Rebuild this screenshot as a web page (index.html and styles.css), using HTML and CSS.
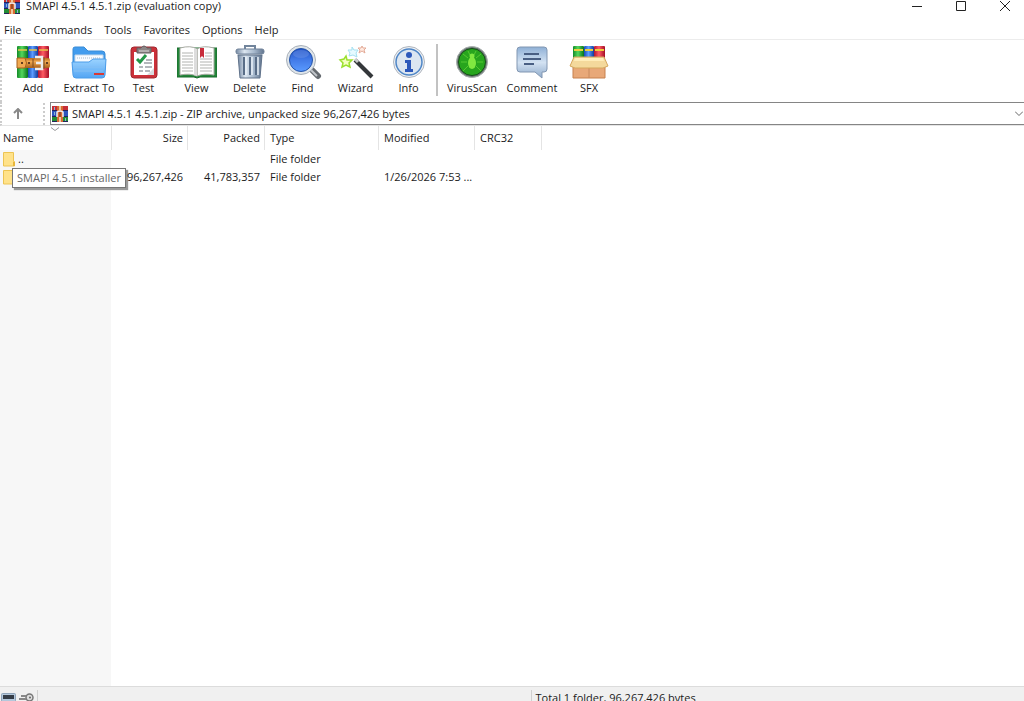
FILE: index.html
```html
<!DOCTYPE html>
<html lang="en">
<head>
<meta charset="utf-8">
<title>SMAPI 4.5.1 4.5.1.zip (evaluation copy)</title>
<link rel="stylesheet" href="styles.css">
</head>
<body>

<svg class="defs" width="0" height="0" aria-hidden="true">
<defs>
<linearGradient id="folder" x2="0" y2="1"><stop stop-color="#9bd3ff"/><stop offset="1" stop-color="#54a5f3"/></linearGradient>
<linearGradient id="steel"><stop stop-color="#7488a2"/><stop offset=".3" stop-color="#dce6f0"/><stop offset=".65" stop-color="#a6b8cc"/><stop offset="1" stop-color="#61748e"/></linearGradient>
<linearGradient id="glass" x2="0" y2="1"><stop stop-color="#1f4fc2"/><stop offset=".5" stop-color="#437be8"/><stop offset="1" stop-color="#5a9bff"/></linearGradient>
<linearGradient id="bubble" x2="0" y2="1"><stop stop-color="#8fb0d6"/><stop offset=".5" stop-color="#d3e2f2"/><stop offset="1" stop-color="#8fabcb"/></linearGradient>
<linearGradient id="bookgreen"><stop stop-color="#138a27"/><stop offset=".45" stop-color="#54d75c"/><stop offset="1" stop-color="#087319"/></linearGradient>
<linearGradient id="bookblue"><stop stop-color="#174bb3"/><stop offset=".45" stop-color="#5c9cff"/><stop offset="1" stop-color="#113c9b"/></linearGradient>
<linearGradient id="bookred"><stop stop-color="#b21631"/><stop offset=".45" stop-color="#ff5b63"/><stop offset="1" stop-color="#a30d26"/></linearGradient>
<linearGradient id="belt" x2="0" y2="1"><stop stop-color="#b5691e"/><stop offset=".35" stop-color="#f0a950"/><stop offset="1" stop-color="#a9601b"/></linearGradient>
<symbol id="rar" viewBox="0 0 16 16">
  <path fill="#c62f37" d="M0 0h16v5H0z"/><path fill="#2d55bd" d="M0 5h16v5H0z"/><path fill="#238c35" d="M0 10h16v6H0z"/>
  <path fill="#24245b" d="M0 4h16v1H0zM0 10h16v1H0zM0 15h16v1H0z"/>
  <path fill="#d96a32" d="M5 0h6v16H5z"/><path fill="#efc7a0" d="M7 0h2v4H7zM7 11h2v5H7z"/>
  <path fill="none" stroke="#eee" stroke-width="1.5" d="M5 11V6q3-2 6 0v5"/><path stroke="#613021" d="M8 6v5"/>
  <path fill="#87b5d7" d="M2 1h1v3H2zM2 6h1v3H2zM13 12h1v3h-1z"/>
</symbol>
<symbol id="dir" viewBox="0 0 12 15">
  <path fill="#ffe28a" stroke="#edc452" d="M.5.5h10v9h1v4.500H.5z"/><path fill="#e8b63a" d="M10 10h2v4h-2z"/>
</symbol>
</defs>
</svg>

<div class="window">

<header class="titlebar">
  <svg class="app-icon" viewBox="0 0 16 16"><use href="#rar"/></svg>
  <span class="title">SMAPI 4.5.1 4.5.1.zip (evaluation copy)</span>
  <button class="caption" aria-label="Minimize"><svg viewBox="0 0 10 10"><path d="M0 5.500h10"/></svg></button>
  <button class="caption" aria-label="Maximize"><svg viewBox="0 0 10 10"><path d="M.5.5h9v9h-9z"/></svg></button>
  <button class="caption" aria-label="Close"><svg viewBox="0 0 10 10"><path d="M0 0l10 10M10 0L0 10"/></svg></button>
</header>

<nav class="menubar">
  <button>File</button>
  <button>Commands</button>
  <button>Tools</button>
  <button>Favorites</button>
  <button>Options</button>
  <button>Help</button>
</nav>

<div class="toolbar">
  <button class="tool wide">
    <svg viewBox="0 0 40 36">
      <rect x="4" y="2" width="11" height="32" rx="1" fill="url(#bookgreen)"/>
      <rect x="15" y="2" width="10" height="32" rx="1" fill="url(#bookblue)"/>
      <rect x="25" y="2" width="11" height="32" rx="1" fill="url(#bookred)"/>
      <path stroke="#e6c64b" stroke-width="1.500" d="M5 6h9M16 6h8M26 6h9"/>
      <rect x="4" y="14" width="33" height="10" rx="2" fill="url(#belt)"/>
      <path fill="#f0a950" stroke="#a65f1c" d="M4 14h8q3 5 0 10H4z"/>
      <path fill="#633d20" d="M8 18h2v2H8zM15 18h2v2h-2zM33 18h2v2h-2z"/>
      <path fill="none" stroke="#ececec" stroke-width="2.500" d="M22 13h7v12h-7M23 19h6"/>
      <path fill="none" stroke="#7b4b20" d="M20 15v8M31 13v12"/>
    </svg>
    Add
  </button>
  <button class="tool wide">
    <svg viewBox="0 0 40 36">
      <path fill="#429cee" stroke="#398bd5" d="M4 5q0-2 2-2h9l4 4h14q3 0 3 3v16H4z"/>
      <path fill="#f8fbff" stroke="#c4d7e9" d="M6 11h28v13H6z"/><path stroke="#a9bacb" stroke-dasharray="1 1" d="M8 14h24"/>
      <path fill="url(#folder)" stroke="#4b9ce9" d="M3 18h17l4-3h13l-1 16q0 3-3 3H7q-3 0-3-3z"/>
      <path stroke="#85bff4" d="M5 23h29M5 27h29"/><path fill="#d93a35" d="M25 29h10v2H25z"/>
    </svg>
    Extract To
  </button>
  <button class="tool">
    <svg viewBox="0 0 40 36">
      <rect x="7" y="3" width="26" height="31" rx="3" fill="#cc3039" stroke="#9e2830"/>
      <path fill="#fff" d="M10 8h20v23H10z"/><path fill="#d8dce0" d="M23 31l7-7v7z"/>
      <path fill="#8c8585" stroke="#635e60" d="M13 9V4h4q3-4 6 0h4v5z"/><path stroke="#ddd" d="M15 7h10"/>
      <path fill="none" stroke="#239747" stroke-width="3" d="M13 15l3 3 6-7"/>
      <path stroke="#9ca0a6" stroke-width="1.500" d="M22 16h6M20 19h8M15 23h4m2 0h7M15 27h4m2 0h5"/>
    </svg>
    Test
  </button>
  <button class="tool">
    <svg viewBox="0 0 40 36">
      <path fill="#24863b" stroke="#176a2a" d="M0 4h40v29H23l-3 1-3-1H0z"/>
      <path fill="#fff" stroke="#a7aaa2" d="M3 4q11-3 17 1v27q-7-3-17-1zM37 4q-11-3-17 1v27q7-3 17-1z"/>
      <path stroke="#b1b3b0" d="M5 9h11M5 12h11M5 15h11M5 18h11M5 21h11M5 24h11M5 27h11M28 9h7M28 12h7M23 15h12M23 18h12M23 21h12M23 24h12M23 27h12"/>
      <path fill="#ddd" d="M17 4l3 1v27l-3-1z"/><path fill="#c82d3b" d="M23 4h4v10l-2-2-2 2z"/>
    </svg>
    View
  </button>
  <button class="tool">
    <svg viewBox="0 0 40 36">
      <path fill="none" stroke="#71849b" stroke-width="2" d="M15 5V2h10v3"/>
      <path fill="url(#steel)" stroke="#60728a" d="M8 11h24l-2 23H10z"/>
      <path stroke="#596d87" stroke-width="2" d="M14 13v18M20 13v18M26 13v18"/><path stroke="#e8eff7" stroke-width="1.500" d="M16 13v18M22 13v18M28 13v18"/>
      <rect x="6" y="5" width="28" height="5" rx="2" fill="url(#steel)" stroke="#71839a"/>
    </svg>
    Delete
  </button>
  <button class="tool">
    <svg viewBox="0 0 40 36">
      <path stroke="#666b70" stroke-width="6" stroke-linecap="round" d="M29 26l6 6"/><path stroke="#c2c6ca" stroke-width="2" d="M27 25l7 7"/>
      <circle cx="18" cy="16" r="14.500" fill="#dfe5ea" stroke="#a9b1ba"/>
      <circle cx="18" cy="16" r="11.500" fill="url(#glass)" stroke="#2453a7"/>
      <ellipse cx="18" cy="10" rx="8" ry="4" fill="#769be8" opacity=".4"/>
    </svg>
    Find
  </button>
  <button class="tool">
    <svg viewBox="0 0 40 36">
      <path stroke="#34373a" stroke-width="4" d="M19 16l17 17"/><path stroke="#9b9da0" d="M21 15l16 16"/><path stroke="#c9cacb" stroke-width="3" d="M19 15l3 3"/>
      <path fill="#f4ffc0" stroke="#9be02f" stroke-width="1.500" d="M10 12l1 4h5l-3 3 1 4-4-2-4 2 1-4-3-3 4-1z"/>
      <path fill="#e6faff" stroke="#a5e0f0" d="M16 3l2 3 4 0-2 3 1 4-4-2-4 1 1-3-2-3 4 0z"/>
      <path fill="#ffe9df" stroke="#e3ab98" d="M26 2l1 2h3l-2 2 1 3-3-2-3 2 1-3-2-2h3z"/>
    </svg>
    Wizard
  </button>
  <button class="tool">
    <svg viewBox="0 0 40 36">
      <circle cx="20" cy="18" r="15.500" fill="#eef1f5" stroke="#b0b6be"/>
      <circle cx="20" cy="18" r="13" fill="#dce6f1" stroke="#4f86c6" stroke-width="1.500"/>
      <circle cx="20" cy="11" r="3" fill="#2c58ba"/><path fill="#2c58ba" d="M16 16h6v9h2v3h-8v-3h2v-6h-2z"/>
    </svg>
    Info
  </button>
  <span class="divider"></span>
  <button class="tool wide">
    <svg viewBox="0 0 40 36">
      <circle cx="20" cy="18" r="15.500" fill="#687471" stroke="#a9b0ae"/>
      <circle cx="20" cy="18" r="13.500" fill="#27a51d" stroke="#154d18"/>
      <path fill="none" stroke="#55c932" d="M16 14l-5-4M24 14l5-4M15 18H9M25 18h6M16 22l-5 5M24 22l5 5M18 11l-2-4M22 11l2-4"/>
      <ellipse cx="20" cy="19" rx="4" ry="6" fill="#80e840"/><circle cx="20" cy="12" r="2.500" fill="#80e840"/>
    </svg>
    VirusScan
  </button>
  <button class="tool wider">
    <svg viewBox="0 0 40 36">
      <path fill="url(#bubble)" stroke="#8297b2" d="M8 3h24q3 0 3 3v19q0 3-3 3h-2v6l-7-6H8q-3 0-3-3V6q0-3 3-3z"/>
      <path stroke="#495f83" stroke-width="2" d="M12 10h15M11 15h18M12 20h10"/>
    </svg>
    Comment
  </button>
  <button class="tool narrow">
    <svg viewBox="0 0 40 36">
      <rect x="4" y="2" width="11" height="14" rx="1" fill="url(#bookgreen)"/><rect x="15" y="2" width="10" height="14" rx="1" fill="url(#bookblue)"/><rect x="25" y="2" width="11" height="14" rx="1" fill="url(#bookred)"/>
      <path stroke="#edcf3d" stroke-width="2" d="M5 6h9M16 6h8M26 6h9"/>
      <path fill="#e8a878" stroke="#c7814f" d="M4 21h32v13H4z"/><path stroke="#c88a5e" d="M20 24v10"/>
      <path fill="#f4d99c" stroke="#d5a75f" d="M5 13h30l4 9-5 2H6l-5-2z"/><path fill="#ffedb9" d="M6 14h28l1 3H5z"/>
    </svg>
    SFX
  </button>
</div>

<div class="addressbar">
  <button class="up" aria-label="Up one level"><svg viewBox="0 0 10 11"><path d="M5 11V1M1 5l4-4 4 4"/></svg></button>
  <div class="address">
    <svg class="app-icon" viewBox="0 0 16 16"><use href="#rar"/></svg>
    <select aria-label="Archive path">
      <option>SMAPI 4.5.1 4.5.1.zip - ZIP archive, unpacked size 96,267,426 bytes</option>
    </select>
    <svg class="arrow" viewBox="0 0 8 5"><path d="M0 .5l4 4 4-4"/></svg>
  </div>
</div>

<main class="files">
<table>
<colgroup><col class="c-name"><col class="c-size"><col class="c-packed"><col class="c-type"><col class="c-modified"><col class="c-crc"><col></colgroup>
<thead>
<tr>
  <th class="sorted">Name<svg class="sort" viewBox="0 0 8 5"><path d="M0 .5l4 3 4-3"/></svg></th>
  <th class="num">Size</th><th class="num">Packed</th><th>Type</th><th>Modified</th><th>CRC32</th><th></th>
</tr>
</thead>
<tbody>
<tr>
  <td class="name"><svg class="dir" viewBox="0 0 12 15"><use href="#dir"/></svg>..</td>
  <td></td><td></td><td>File folder</td><td></td><td></td><td></td>
</tr>
<tr>
  <td class="name"><svg class="dir" viewBox="0 0 12 15"><use href="#dir"/></svg><span class="tip">SMAPI 4.5.1 installer</span></td>
  <td class="num">96,267,426</td><td class="num">41,783,357</td><td>File folder</td><td>1/26/2026 7:53 ...</td><td></td><td></td>
</tr>
</tbody>
</table>
</main>

<footer class="statusbar">
  <div class="status-icons">
    <svg viewBox="0 0 15 9"><rect x=".5" y=".5" width="14" height="8" rx="1" fill="#b4c8dc" stroke="#8fa3b8"/><path fill="#343c46" d="M2 2h11v4H2z"/></svg>
    <svg viewBox="0 0 15 9"><circle cx="10.500" cy="4.500" r="3.500" fill="#ddd" stroke="#777" stroke-width="1.500"/><circle cx="11" cy="4.500" r="1" fill="#666"/><path fill="none" stroke="#888" stroke-width="2" d="M7 3H2M7 6H0"/></svg>
  </div>
  <div class="pane"></div>
  <div class="pane total">Total 1 folder, 96,267,426 bytes</div>
</footer>

</div>
</body>
</html>
```

FILE: styles.css
```css
* {box-sizing: border-box;}
body {margin: 0; background: #fff; color: #1b1b1b; overflow: hidden;}
body, button, select {font-family: "Open Sans", "Noto Sans", sans-serif; font-size: 11px; line-height: 16px;}
button {border: 0; padding: 0; background: none; color: inherit;}
svg {display: block; fill: none;}
.defs {position: absolute;}

.window {display: flex; flex-direction: column; height: 100vh;}
.app-icon {width: 16px; height: 16px; flex: none;}

/* title and menu */
.titlebar {display: flex; align-items: center; gap: 6px; height: 12px; padding-left: 4px; flex: none;}
.title {flex: 1; white-space: nowrap;}
.caption {width: 38px; height: 12px; display: flex; align-items: center; justify-content: center;}
.caption svg {width: 10px; height: 10px; stroke: #222;}
.menubar {display: flex; gap: 12px; padding: 10px 4px 1px; border-bottom: 1px solid #ececec; flex: none;}

/* toolbar */
.toolbar {display: flex; height: 62px; padding: 4px 0 0 3px; border-left: 2px dotted #ccc; flex: none;}
.tool {width: 53px; height: 54px; display: flex; flex-direction: column; align-items: center; white-space: nowrap;}
.tool svg {width: 40px; height: 36px; flex: none;}
.wide {width: 56px;}
.wider {width: 64px;}
.narrow {width: 50px;}
.divider {width: 2px; height: 52px; margin: 0 6px 0 1px; background: #c2c2c2;}

/* address */
.addressbar {display: flex; align-items: center; height: 24px; border-left: 2px dotted #ccc; border-bottom: 1px solid #e5e5e5; flex: none;}
.up {width: 43px; height: 22px; padding-left: 11px; border-right: 2px dotted #ccc;}
.up svg {width: 10px; height: 11px; stroke: #888; stroke-width: 2;}
.address {flex: 1; display: flex; align-items: center; height: 23px; margin-left: 5px; padding: 0 1px; border: 1px solid #858585; border-right: 0;}
.address select {flex: 1; appearance: none; border: 0; padding: 0 0 0 4px; background: none; color: inherit; outline: 0;}
.arrow {width: 8px; height: 5px; stroke: #666;}

/* file list */
.files {flex: 1; min-height: 0; background: linear-gradient(#f7f7f7, #f7f7f7) 0 0 / 111px 100% no-repeat;}
table {width: 100%; table-layout: fixed; border-collapse: separate; border-spacing: 0;}
.c-name {width: 112px;}
.c-size {width: 76px;}
.c-packed {width: 77px;}
.c-type {width: 114px;}
.c-modified {width: 96px;}
.c-crc {width: 67px;}
th, td {height: 18px; padding: 0 5px; text-align: left; font-weight: normal; white-space: nowrap;}
th {height: 24px; background: #fff; border-right: 1px solid #e4e4e4;}
th:last-child {border-right: 0;}
th:first-child, td:first-child {padding-left: 3px;}
th.num {padding-right: 4px;}
.num {text-align: right;}
.sorted {position: relative;}
.sort {position: absolute; top: 1px; left: 51px; width: 8px; height: 5px; stroke: #999;}
.name {position: relative;}
.dir {display: inline-block; width: 12px; height: 15px; margin-right: 3px; vertical-align: middle;}
.tip {position: absolute; z-index: 1; left: 12px; top: 0; padding: 1px 4px; background: #fff; border: 1px solid #767676; color: #666; box-shadow: 2px 2px 1px #9a9a9a;}
.name + .num {position: relative; z-index: 2;}

/* status */
.statusbar {display: flex; height: 15px; padding-top: 3px; background: #f0f0f0; border-top: 1px solid #dcdcdc; overflow: hidden; flex: none;}
.status-icons {display: flex; gap: 3px; width: 37px; padding: 3px 0 0 1px;}
.status-icons svg {width: 15px; height: 9px;}
.pane {flex: 1; border-left: 1px solid #d0d0d0; padding-left: 4px; white-space: nowrap;}
```
